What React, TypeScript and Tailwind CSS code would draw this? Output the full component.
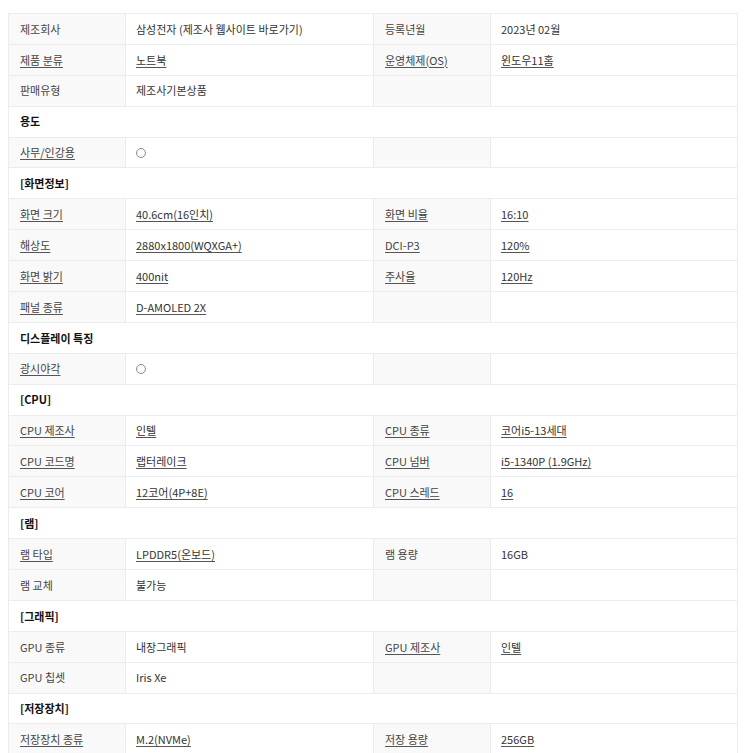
import React from "react";

type Cell = { text?: string; link?: boolean; circle?: boolean };
type Row =
  | { kind: "section"; title: string }
  | { kind: "spec"; cells: [Cell, Cell, Cell, Cell] };

const E: Cell = {};
const t = (text: string): Cell => ({ text });
const l = (text: string): Cell => ({ text, link: true });

const rows: Row[] = [
  { kind: "spec", cells: [t("제조회사"), t("삼성전자 (제조사 웹사이트 바로가기)"), t("등록년월"), t("2023년 02월")] },
  { kind: "spec", cells: [l("제품 분류"), l("노트북"), l("운영체제(OS)"), l("윈도우11홈")] },
  { kind: "spec", cells: [t("판매유형"), t("제조사기본상품"), E, E] },
  { kind: "section", title: "용도" },
  { kind: "spec", cells: [l("사무/인강용"), { circle: true }, E, E] },
  { kind: "section", title: "[화면정보]" },
  { kind: "spec", cells: [l("화면 크기"), l("40.6cm(16인치)"), l("화면 비율"), l("16:10")] },
  { kind: "spec", cells: [l("해상도"), l("2880x1800(WQXGA+)"), l("DCI-P3"), l("120%")] },
  { kind: "spec", cells: [l("화면 밝기"), l("400nit"), l("주사율"), l("120Hz")] },
  { kind: "spec", cells: [l("패널 종류"), l("D-AMOLED 2X"), E, E] },
  { kind: "section", title: "디스플레이 특징" },
  { kind: "spec", cells: [l("광시야각"), { circle: true }, E, E] },
  { kind: "section", title: "[CPU]" },
  { kind: "spec", cells: [l("CPU 제조사"), l("인텔"), l("CPU 종류"), l("코어i5-13세대")] },
  { kind: "spec", cells: [l("CPU 코드명"), l("랩터레이크"), l("CPU 넘버"), l("i5-1340P (1.9GHz)")] },
  { kind: "spec", cells: [l("CPU 코어"), l("12코어(4P+8E)"), l("CPU 스레드"), l("16")] },
  { kind: "section", title: "[램]" },
  { kind: "spec", cells: [l("램 타입"), l("LPDDR5(온보드)"), t("램 용량"), t("16GB")] },
  { kind: "spec", cells: [t("램 교체"), t("불가능"), E, E] },
  { kind: "section", title: "[그래픽]" },
  { kind: "spec", cells: [t("GPU 종류"), t("내장그래픽"), l("GPU 제조사"), l("인텔")] },
  { kind: "spec", cells: [t("GPU 칩셋"), t("Iris Xe"), E, E] },
  { kind: "section", title: "[저장장치]" },
  { kind: "spec", cells: [l("저장장치 종류"), l("M.2(NVMe)"), l("저장 용량"), l("256GB")] },
];

const CellBody = ({ cell }: { cell: Cell }) => {
  if (cell.circle) {
    return <span className="inline-block h-[10px] w-[10px] rounded-full border border-[#888]" />;
  }
  if (!cell.text) return null;
  return (
    <span className={cell.link ? "underline underline-offset-2 decoration-[#555]" : ""}>{cell.text}</span>
  );
};

export default function App() {
  return (
    <div
      className="min-h-screen bg-white pl-[8px] pt-[13px] text-[11px] text-[#333]"
      style={{ fontFamily: '"Noto Sans CJK KR", "Noto Sans", sans-serif' }}
    >
      <div className="w-[730px] border border-[#ececec] border-b-0">
        {rows.map((row, i) =>
          row.kind === "section" ? (
            <div
              key={i}
              className="flex h-[30.9px] items-center border-b border-[#ececec] bg-white pl-[11px] font-bold text-[#111]"
            >
              {row.title}
            </div>
          ) : (
            <div
              key={i}
              className="grid h-[30.9px] grid-cols-[117px_248px_117px_1fr] border-b border-[#ececec]"
            >
              {row.cells.map((cell, j) => (
                <div
                  key={j}
                  className={
                    j % 2 === 0
                      ? "flex items-center border-r border-[#ececec] bg-[#f9f9f9] pl-[11px] text-[#444]"
                      : "flex items-center border-r border-[#ececec] bg-white pl-[10px] text-[#333] last:border-r-0"
                  }
                >
                  <CellBody cell={cell} />
                </div>
              ))}
            </div>
          )
        )}
      </div>
    </div>
  );
}
